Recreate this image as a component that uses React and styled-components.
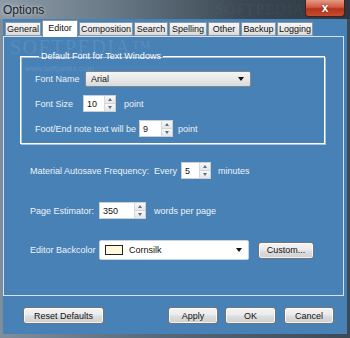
import React from "react";
import styled, { createGlobalStyle } from "styled-components";

const Global = createGlobalStyle`
  html, body { margin: 0; padding: 0; background: #1f2830; }
  * { box-sizing: border-box; }
`;

const FONT = `"Liberation Sans", Arial, sans-serif`;

const Window = styled.div`
  width: 350px;
  height: 338px;
  display: flex;
  flex-direction: column;
  background: linear-gradient(90deg, #7d8f9d 0%, #56697a 45%, #3c4a56 100%);
  font-family: ${FONT};
  overflow: hidden;
  position: relative;
`;

const TitleBar = styled.div`
  height: 19px;
  display: flex;
  align-items: flex-start;
  justify-content: space-between;
  background: linear-gradient(90deg, #8d9ba6 0%, #6b7b88 30%, #3b4853 70%, #2c3741 100%);
  position: relative;
`;

const Title = styled.div`
  font-size: 12px;
  color: #1c232a;
  padding: 3px 0 0 3px;
  text-shadow: 0 0 4px rgba(255,255,255,0.75);
`;

const TitleMark = styled.div`
  position: absolute;
  left: 215px;
  top: 1px;
  font-family: "Liberation Serif", serif;
  font-size: 15px;
  letter-spacing: 1px;
  color: rgba(255,255,255,0.05);
`;

const CloseButton = styled.div`
  width: 40px;
  height: 17px;
  margin-right: 5px;
  border: 1px solid #4a1e18;
  border-top: none;
  border-radius: 0 0 4px 4px;
  background: linear-gradient(180deg, #e39a86 0%, #cf5a40 45%, #b5341d 55%, #c84c30 100%);
  display: flex;
  align-items: center;
  justify-content: center;
  color: #fff;
  font-size: 12px;
  font-weight: bold;
  text-shadow: 0 0 2px #5a1a0c;
`;

const Client = styled.div`
  flex: 1;
  margin: 0 3px 4px 3px;
  background: #4781b5;
  display: flex;
  flex-direction: column;
`;

const TabStrip = styled.div`
  height: 17px;
  display: flex;
  align-items: flex-end;
  padding-left: 2px;
`;

const Tab = styled.div`
  height: ${p => (p.$active ? "17px" : "14px")};
  width: ${p => p.$w}px;
  margin-right: 1px;
  margin-bottom: ${p => (p.$active ? "-1px" : "0")};
  border: 1px solid #8a98a6;
  border-bottom: ${p => (p.$active ? "none" : "1px solid #8a98a6")};
  background: ${p =>
    p.$active ? "#ffffff" : "linear-gradient(180deg, #f6f6f6 0%, #e9e9e9 50%, #dadada 100%)"};
  color: #111;
  font-size: 9px;
  display: flex;
  align-items: ${p => (p.$active ? "flex-start" : "center")};
  padding-top: ${p => (p.$active ? "2px" : "0")};
  justify-content: center;
  position: relative;
  z-index: ${p => (p.$active ? 2 : 1)};
`;

const Panel = styled.div`
  height: 260px;
  margin-right: 3px;
  border: 1px solid #d5e2ee;
  background: #4781b5;
  display: flex;
  flex-direction: column;
  padding: 13px 0 0 16px;
  position: relative;
  color: #eef3f8;
  font-size: 9px;
`;

const Watermark = styled.div`
  position: absolute;
  left: 6px;
  top: 0px;
  font-family: "Liberation Serif", serif;
  font-size: 20px;
  line-height: 20px;
  letter-spacing: 1.5px;
  color: rgba(255,255,255,0.1);
  pointer-events: none;
`;

const WatermarkUrl = styled.div`
  position: absolute;
  left: 21px;
  top: 27px;
  font-size: 8px;
  color: rgba(255,255,255,0.15);
  pointer-events: none;
`;

const Group = styled.fieldset`
  width: 305px;
  height: 94px;
  margin: 0;
  padding: 9px 0 0 14px;
  border: 1px solid #ffffff;
  box-shadow: inset 1px 1px 0 #a9c3db, 1px 1px 0 #a9c3db;
  display: flex;
  flex-direction: column;
  gap: 8px;
`;

const Legend = styled.legend`
  font-size: 9px;
  color: #ffffff;
  padding: 0 2px;
  margin-left: 4px;
  line-height: 12px;
`;

const Row = styled.div`
  display: flex;
  align-items: center;
  height: ${p => p.$h || 17}px;
  margin-top: ${p => p.$mt || 0}px;
`;

const Label = styled.span`
  width: ${p => p.$w}px;
  flex: none;
  white-space: nowrap;
  color: #eef3f8;
`;

const After = styled.span`
  margin-left: ${p => p.$ml}px;
  white-space: nowrap;
  color: #eef3f8;
`;

const Select = styled.div`
  width: ${p => p.$w}px;
  height: ${p => p.$h}px;
  border: 1px solid ${p => (p.$white ? "#c9d3dc" : "#7f8790")};
  border-radius: 2px;
  background: ${p =>
    p.$white ? "#ffffff" : "linear-gradient(180deg, #f4f4f4 0%, #e9e9e9 50%, #d9d9d9 100%)"};
  display: flex;
  align-items: center;
  padding: 0 4px 0 5px;
  color: #111;
  font-size: 9px;
  gap: 6px;
`;

const SelectText = styled.span`
  flex: 1;
`;

const Arrow = styled.span`
  width: 0;
  height: 0;
  border-left: 3.5px solid transparent;
  border-right: 3.5px solid transparent;
  border-top: 4px solid #111;
  margin-right: 2px;
`;

const Swatch = styled.span`
  width: 18px;
  height: 10px;
  background: #fff8dc;
  border: 1px solid #222;
  flex: none;
`;

const Spin = styled.div`
  width: ${p => p.$w}px;
  height: 17px;
  border: 1px solid #c7d0d8;
  background: #ffffff;
  display: flex;
  align-items: stretch;
  flex: none;
`;

const SpinValue = styled.span`
  flex: 1;
  color: #111;
  font-size: 9px;
  padding-left: 3px;
  display: flex;
  align-items: center;
`;

const SpinButtons = styled.div`
  width: 11px;
  display: flex;
  flex-direction: column;
  border-left: 1px solid #d4d9de;
`;

const SpinBtn = styled.div`
  flex: 1;
  display: flex;
  align-items: center;
  justify-content: center;
  background: linear-gradient(180deg, #f7f7f7, #e6e6e6);
  border-bottom: ${p => (p.$top ? "1px solid #d0d5da" : "none")};
`;

const Tri = styled.span`
  width: 0;
  height: 0;
  border-left: 2.5px solid transparent;
  border-right: 2.5px solid transparent;
  ${p => (p.$up ? "border-bottom: 3px solid #5a6f88;" : "border-top: 3px solid #5a6f88;")}
`;

const Button = styled.div`
  width: ${p => p.$w}px;
  height: 17px;
  margin-left: ${p => p.$ml || 0}px;
  border: 1px solid #6f757b;
  border-radius: 3px;
  background: linear-gradient(180deg, #f4f4f4 0%, #ebebeb 45%, #dddddd 55%, #cfcfcf 100%);
  box-shadow: inset 0 0 0 1px rgba(255,255,255,0.7);
  color: #111;
  font-size: 9px;
  display: flex;
  align-items: center;
  justify-content: center;
  flex: none;
`;

const Lower = styled.div`
  display: flex;
  flex-direction: column;
  padding-left: 10px;
`;

const Footer = styled.div`
  display: flex;
  align-items: center;
  padding: 11px 0 0 20px;
`;

const Spinner = ({ w, value }) => (
  <Spin $w={w}>
    <SpinValue>{value}</SpinValue>
    <SpinButtons>
      <SpinBtn $top><Tri $up /></SpinBtn>
      <SpinBtn><Tri /></SpinBtn>
    </SpinButtons>
  </Spin>
);

const tabs = [
  ["General", 36],
  ["Editor", 36, true],
  ["Composition", 54],
  ["Search", 34],
  ["Spelling", 38],
  ["Other", 32],
  ["Backup", 35],
  ["Logging", 36],
];

export default function App() {
  return (
    <>
      <Global />
      <Window>
        <TitleBar>
          <Title>Options</Title>
          <TitleMark>SOFTPEDIA</TitleMark>
          <CloseButton>x</CloseButton>
        </TitleBar>
        <Client>
          <TabStrip>
            {tabs.map(([t, w, a]) => (
              <Tab key={t} $w={w} $active={a}>{t}</Tab>
            ))}
          </TabStrip>
          <Panel>
            <Watermark>SOFTPEDIA™</Watermark>
            <WatermarkUrl>www.softpedia.com</WatermarkUrl>
            <Group>
              <Legend>Default Font for Text Windows</Legend>
              <Row $h={16}>
                <Label $w={50}>Font Name</Label>
                <Select $w={166} $h={16}>
                  <SelectText>Arial</SelectText>
                  <Arrow />
                </Select>
              </Row>
              <Row>
                <Label $w={48}>Font Size</Label>
                <Spinner w={33} value="10" />
                <After $ml={8}>point</After>
              </Row>
              <Row>
                <Label $w={104}>Foot/End note text will be</Label>
                <Spinner w={34} value="9" />
                <After $ml={5}>point</After>
              </Row>
            </Group>
            <Lower>
              <Row $mt={18}>
                <Label $w={151}>Material Autosave Frequency:&nbsp;&nbsp;Every</Label>
                <Spinner w={30} value="5" />
                <After $ml={7}>minutes</After>
              </Row>
              <Row $mt={23}>
                <Label $w={69}>Page Estimator:</Label>
                <Spinner w={47} value="350" />
                <After $ml={8}>words per page</After>
              </Row>
              <Row $mt={21} $h={20}>
                <Label $w={69}>Editor Backcolor</Label>
                <Select $w={150} $h={20} $white>
                  <Swatch />
                  <SelectText>Cornsilk</SelectText>
                  <Arrow />
                </Select>
                <Button $w={56} $ml={9}>Custom...</Button>
              </Row>
            </Lower>
          </Panel>
          <Footer>
            <Button $w={81}>Reset Defaults</Button>
            <Button $w={50} $ml={64}>Apply</Button>
            <Button $w={51} $ml={7}>OK</Button>
            <Button $w={50} $ml={8}>Cancel</Button>
          </Footer>
        </Client>
      </Window>
    </>
  );
}
